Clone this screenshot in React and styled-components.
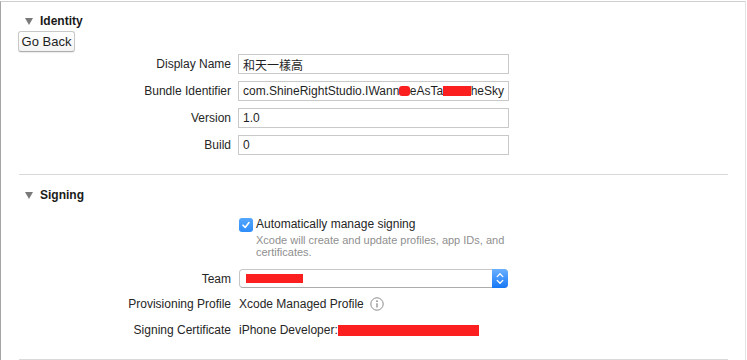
import styled, { createGlobalStyle } from 'styled-components';

const Global = createGlobalStyle`
  body {
    margin: 0;
    background: #fff;
    font-family: 'Liberation Sans', 'Noto Sans CJK TC', Arial, sans-serif;
    font-size: 12px;
    color: #262626;
  }
`;

const Frame = styled.div`
  box-sizing: border-box;
  width: 746px;
  height: 360px;
  margin-top: 1px;
  border-top: 1px solid #cfcfcf;
  border-left: 1px solid #a6a6a6;
  border-right: 1px solid #e4e4e4;
  overflow: hidden;
`;

const Section = styled.section`
  margin-left: 18px;
  width: 709px;
  padding-top: ${p => p.$top}px;
  padding-bottom: ${p => p.$bottom}px;
  border-bottom: 1px solid #d9d9d9;
`;

const Header = styled.div`
  display: flex;
  align-items: center;
  height: 16px;
  padding-left: 6px;
  gap: 7px;
  font-weight: bold;
  font-size: 12px;
  color: #1a1a1a;
`;

const Triangle = styled.span`
  width: 0;
  height: 0;
  border-left: 4px solid transparent;
  border-right: 4px solid transparent;
  border-top: 7px solid #7a7a7a;
`;

const Button = styled.button`
  display: block;
  margin: 2px 0 0 -1px;
  width: 57px;
  height: 21px;
  padding: 0;
  border: 1px solid #c8c8c8;
  border-bottom-color: #aeaeae;
  border-radius: 3px;
  background: linear-gradient(#ffffff, #f3f3f3);
  box-shadow: 0 1px 1px rgba(0, 0, 0, 0.08);
  font-family: 'Liberation Sans', Arial, sans-serif;
  font-size: 13px;
  color: #1f1f1f;
`;

const Row = styled.div`
  display: flex;
  align-items: ${p => (p.$start ? 'flex-start' : 'center')};
  gap: 8px;
  margin-top: ${p => p.$top}px;
  min-height: ${p => p.$h}px;
`;

const Label = styled.div`
  width: 212px;
  flex: none;
  text-align: right;
  line-height: 16px;
`;

const Input = styled.div`
  box-sizing: border-box;
  width: 271px;
  height: 20px;
  margin-left: -1px;
  padding: 0 4px;
  border: 1px solid #c9c9c9;
  display: flex;
  align-items: center;
  white-space: nowrap;
  overflow: hidden;
  color: #1f1f1f;
`;

const Redact = styled.span`
  display: inline-block;
  width: ${p => p.$w}px;
  height: ${p => p.$h}px;
  background: #fc1f1f;
  vertical-align: middle;
  border-radius: ${p => (p.$round ? '3px' : '0')};
`;

const CheckWrap = styled.div`
  display: flex;
  gap: 3px;
`;

const Box = styled.span`
  width: 14px;
  height: 14px;
  flex: none;
  margin-top: 2px;
  border-radius: 3px;
  background: linear-gradient(#55a7fd, #2e8dfb);
  display: flex;
  align-items: center;
  justify-content: center;
`;

const CheckText = styled.div`
  line-height: 16px;
`;

const Hint = styled.div`
  margin-top: 2px;
  width: 260px;
  font-size: 11px;
  line-height: 12px;
  color: #8f8f8f;
`;

const Popup = styled.div`
  box-sizing: border-box;
  width: 269px;
  height: 19px;
  border: 1px solid #c6c6c6;
  border-bottom-color: #acacac;
  border-radius: 4px;
  display: flex;
  align-items: center;
  padding-left: 6px;
  position: relative;
  background: #fff;
`;

const Stepper = styled.span`
  position: absolute;
  right: -1px;
  top: -1px;
  width: 16px;
  height: 19px;
  border-radius: 0 4px 4px 0;
  background: linear-gradient(#6ab0ff, #1677f5);
  display: flex;
  align-items: center;
  justify-content: center;
`;

const Value = styled.div`
  display: flex;
  align-items: center;
  gap: ${p => p.$gap}px;
  line-height: 16px;
  white-space: nowrap;
`;

const App = () => {
  return (
    <>
      <Global />
      <Frame>
        <Section $top={11} $bottom={19}>
          <Header><Triangle />Identity</Header>
          <Button>Go Back</Button>
          <Row $top={2} $h={20}>
            <Label>Display Name</Label>
            <Input>和天一樣高</Input>
          </Row>
          <Row $top={7} $h={20}>
            <Label>Bundle Identifier</Label>
            <Input>
              com.ShineRightStudio.IWann<Redact $w={13} $h={10} $round />eAsTa<Redact $w={34} $h={10} />heSky
            </Input>
          </Row>
          <Row $top={7} $h={20}>
            <Label>Version</Label>
            <Input>1.0</Input>
          </Row>
          <Row $top={7} $h={20}>
            <Label>Build</Label>
            <Input>0</Input>
          </Row>
        </Section>
        <Section $top={12} $bottom={20}>
          <Header><Triangle />Signing</Header>
          <Row $top={13} $h={42} $start>
            <Label />
            <CheckWrap>
              <Box>
                <svg width="10" height="10" viewBox="0 0 10 10">
                  <path d="M2 5.2 L4.2 7.4 L8 2.6" fill="none" stroke="#fff" strokeWidth="1.6" strokeLinecap="round" strokeLinejoin="round" />
                </svg>
              </Box>
              <div>
                <CheckText>Automatically manage signing</CheckText>
                <Hint>Xcode will create and update profiles, app IDs, and certificates.</Hint>
              </div>
            </CheckWrap>
          </Row>
          <Row $top={11} $h={19}>
            <Label>Team</Label>
            <Popup>
              <Redact $w={57} $h={9} />
              <Stepper>
                <svg width="8" height="13" viewBox="0 0 8 13">
                  <path d="M1.2 4.6 L4 1.8 L6.8 4.6 M1.2 8.4 L4 11.2 L6.8 8.4" fill="none" stroke="#fff" strokeWidth="1.3" strokeLinecap="round" strokeLinejoin="round" />
                </svg>
              </Stepper>
            </Popup>
          </Row>
          <Row $top={7} $h={18}>
            <Label>Provisioning Profile</Label>
            <Value $gap={6}>
              Xcode Managed Profile
              <svg width="14" height="14" viewBox="0 0 14 14">
                <circle cx="7" cy="7" r="6.2" fill="none" stroke="#8c8c8c" strokeWidth="1" />
                <circle cx="7" cy="4.2" r="0.9" fill="#8c8c8c" />
                <path d="M7 6.2 V10.6" stroke="#8c8c8c" strokeWidth="1.3" />
              </svg>
            </Value>
          </Row>
          <Row $top={8} $h={18}>
            <Label>Signing Certificate</Label>
            <Value $gap={0}>
              iPhone Developer:
              <Redact $w={141} $h={11} />
            </Value>
          </Row>
        </Section>
      </Frame>
    </>
  );
};

export default App;
